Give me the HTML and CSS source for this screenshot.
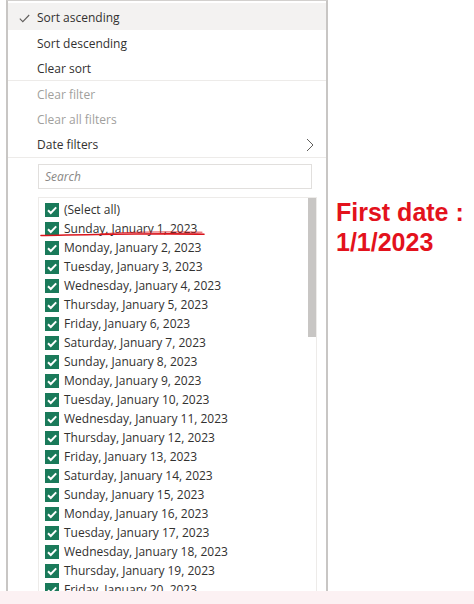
FILE: index.html
```html
<!DOCTYPE html>
<html>
<head>
<meta charset="utf-8">
<link rel="stylesheet" href="styles.css">
</head>
<body>
<div class="page">
  <div class="main">
    <div class="menu">
      <div class="item hover">
        <svg class="tick" width="11" height="9" viewBox="0 0 11 9"><path d="M0.8 4.6 L3.8 7.6 L10.2 1" fill="none" stroke="#605e5c" stroke-width="1.1"/></svg>
        <span>Sort ascending</span>
      </div>
      <div class="item tall"><span>Sort descending</span></div>
      <div class="item short"><span>Clear sort</span></div>
      <div class="sep first"></div>
      <div class="item disabled"><span>Clear filter</span></div>
      <div class="item disabled"><span>Clear all filters</span></div>
      <div class="item sub"><span>Date filters</span>
        <svg class="chev" width="8" height="14" viewBox="0 0 8 14"><path d="M1 1 L7 7 L1 13" fill="none" stroke="#605e5c" stroke-width="1"/></svg>
      </div>
      <div class="sep"></div>
      <div class="search"><span>Search</span></div>
      <div class="list" id="list">
        <div class="thumb"></div>
        <svg class="ink" width="170" height="12" viewBox="0 0 170 12">
          <path d="M1 8.5 C 30 8, 60 7.2, 95 7 C 120 6.8, 145 6.6, 164 7.2" fill="none" stroke="#d9141c" stroke-width="1.6" stroke-linecap="round"/>
          <path d="M60 7 C 85 5, 120 4.6, 162 5.2" fill="none" stroke="#d9141c" stroke-width="0.8" stroke-linecap="round"/>
        </svg>
      </div>
    </div>
    <div class="note">First date :<br>1/1/2023</div>
  </div>
  <div class="strip"></div>
</div>
<script src="app.js"></script>
</body>
</html>
```

FILE: app.js
```js
(function () {
  var days = ["Sunday","Monday","Tuesday","Wednesday","Thursday","Friday","Saturday"];
  var list = document.getElementById("list");
  var labels = ["(Select all)"];
  for (var d = 1; d <= 21; d++) {
    labels.push(days[(d - 1) % 7] + ", January " + d + ", 2023");
  }
  labels.forEach(function (t) {
    var row = document.createElement("div");
    row.className = "row";
    row.innerHTML = '<span class="cb"><svg width="14" height="14" viewBox="0 0 14 14"><path d="M3 7.2 L5.8 10 L11.2 4.4" fill="none" stroke="#fff" stroke-width="2"/></svg></span><span class="lbl"></span>';
    row.querySelector(".lbl").textContent = t;
    list.appendChild(row);
  });
})();
```

FILE: styles.css
```css
html, body {
  margin: 0;
  padding: 0;
  background: #fff;
}
.page {
  width: 474px;
  height: 604px;
  overflow: hidden;
  font-family: "Open Sans", "Noto Sans", sans-serif;
  color: #323130;
}
.main {
  display: flex;
  height: 591px;
}
.menu {
  margin-left: 6px;
  width: 322px;
  height: 591px;
  box-sizing: border-box;
  border-left: 2px solid #c8c6c4;
  border-right: 2px solid #c8c6c4;
  border-top: 1px solid #d2d0ce;
  padding-top: 2px;
  overflow: hidden;
  position: relative;
}
.item {
  height: 25px;
  display: flex;
  align-items: center;
  padding-left: 29px;
  font-size: 12px;
  position: relative;
}
.item.hover {
  height: 25px;
  padding-top: 2px;
  background: #f3f2f1;
}
.item.tall {
  height: 26px;
}
.item.short {
  height: 24px;
}
.item.disabled {
  color: #a19f9d;
}
.tick {
  position: absolute;
  left: 11px;
  top: 11px;
}
.chev {
  position: absolute;
  right: 12px;
  top: 6px;
}
.sep {
  height: 1px;
  background: #edebe9;
}
.sep.first {
  margin-bottom: 1px;
}
.search {
  margin: 6px 0 0 30px;
  width: 274px;
  height: 25px;
  box-sizing: border-box;
  border: 1px solid #e1dfdd;
  display: flex;
  align-items: center;
  padding-left: 6px;
  font-size: 12px;
  font-style: italic;
  color: #8a8886;
}
.list {
  margin: 8px 0 0 30px;
  width: 279px;
  box-sizing: border-box;
  border: 1px solid #edebe9;
  border-bottom: none;
  padding: 2px 0 0 6px;
  position: relative;
}
.thumb {
  position: absolute;
  right: 0;
  top: 0;
  width: 8px;
  height: 139px;
  background: #c8c6c4;
}
.ink {
  position: absolute;
  left: 1px;
  top: 29px;
}
.row {
  height: 19px;
  display: flex;
  align-items: center;
  font-size: 12px;
}
.cb {
  width: 14px;
  height: 14px;
  background: #1a7a5a;
  display: flex;
  margin-right: 5px;
  flex: none;
}
.lbl {
  white-space: nowrap;
}
.note {
  margin-left: 8px;
  padding-top: 197px;
  font-family: "Liberation Sans", Arial, sans-serif;
  font-weight: bold;
  font-size: 25px;
  line-height: 30px;
  color: #e3121c;
}
.strip {
  height: 13px;
  background: #fcf1f3;
}
```
